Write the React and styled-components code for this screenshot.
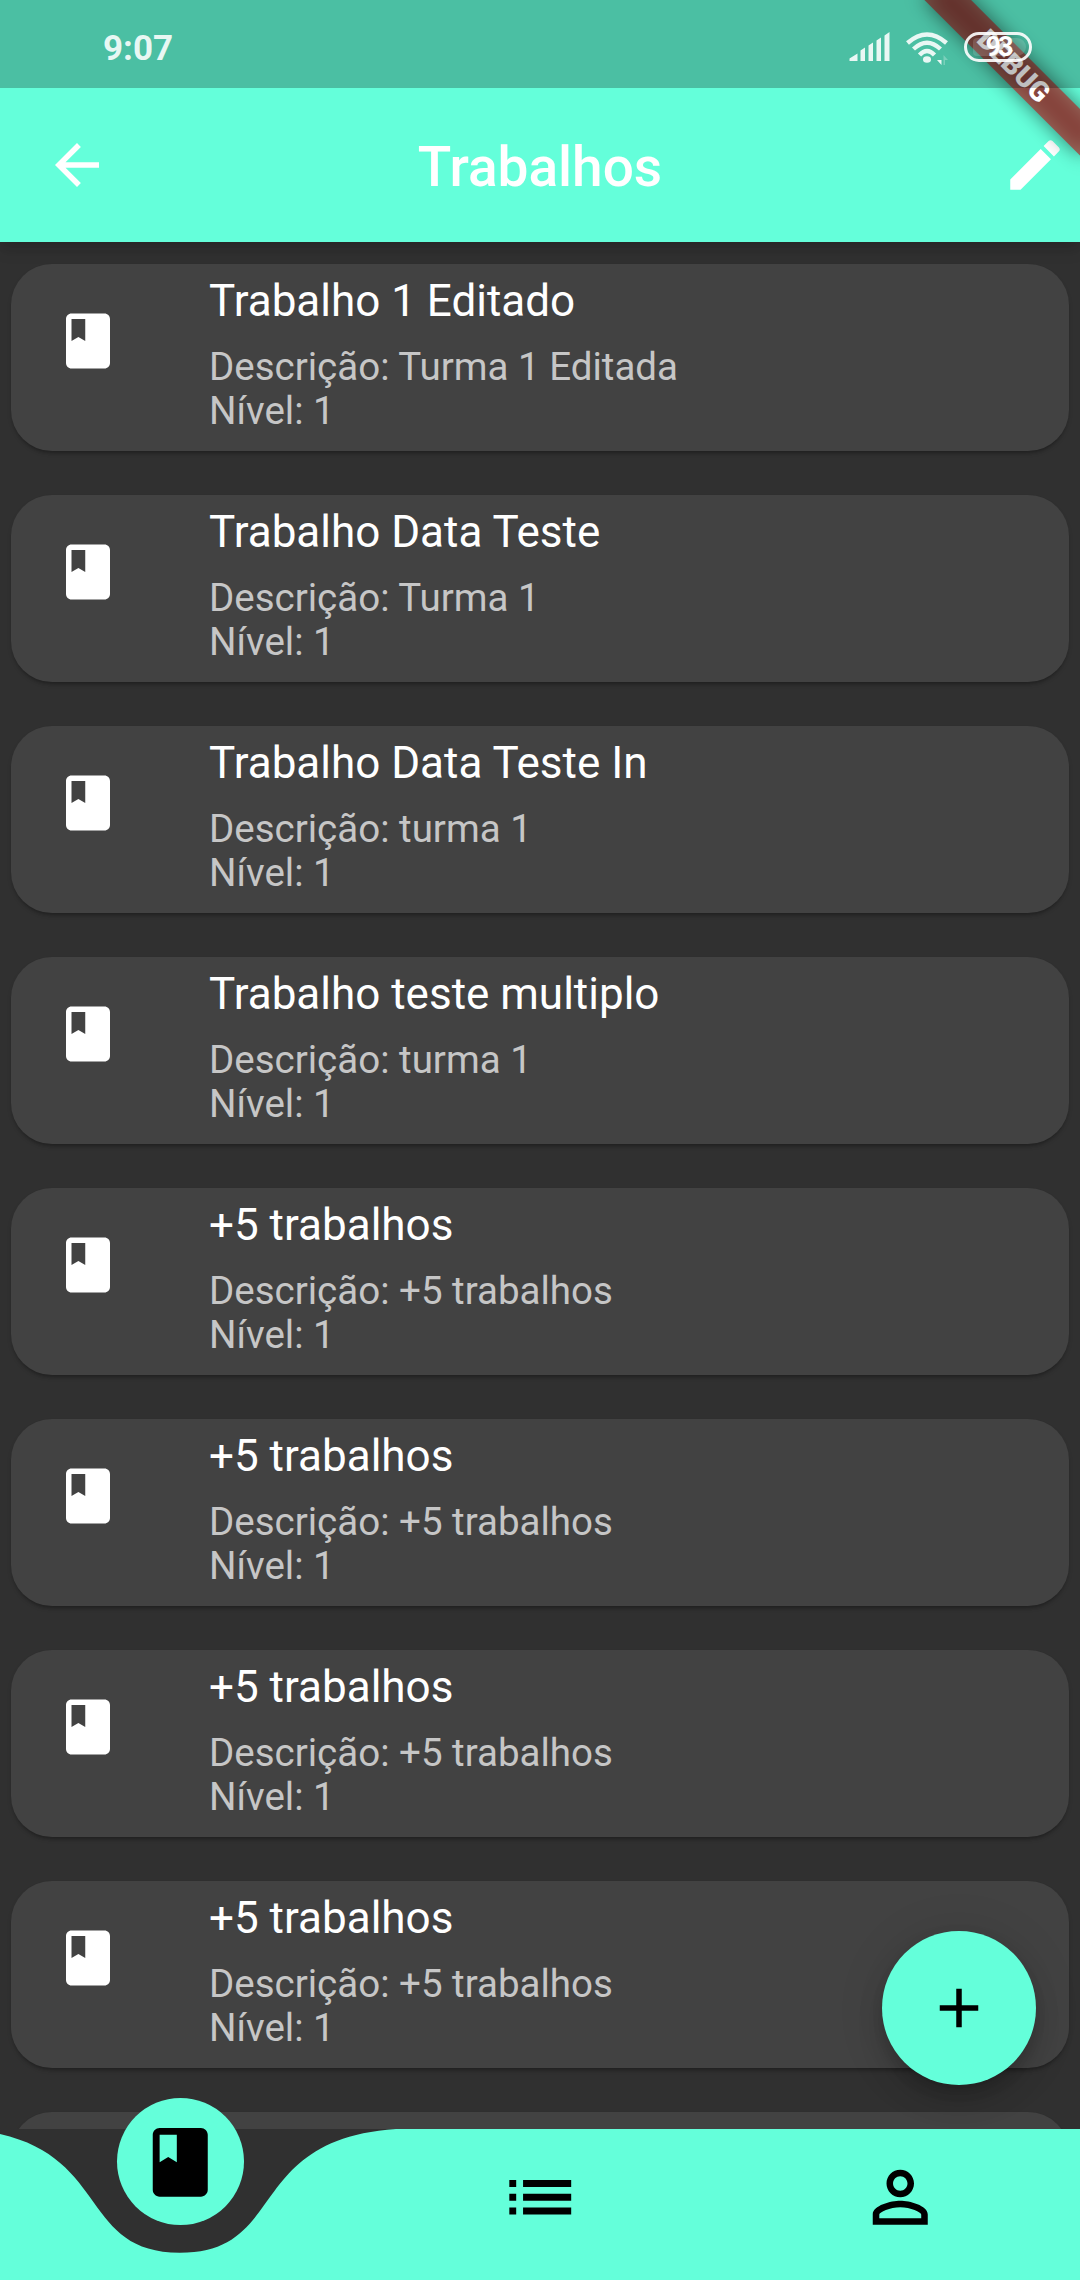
import React from "react";
import styled, { createGlobalStyle } from "styled-components";

const ACCENT = "#64ffda";

const GlobalStyle = createGlobalStyle`
  html, body { margin: 0; padding: 0; background: #303030; }
  * { box-sizing: border-box; }
`;

const Screen = styled.div`
  position: relative;
  display: flex;
  flex-direction: column;
  width: 1080px;
  height: 2280px;
  overflow: hidden;
  background: #303030;
  font-family: Roboto, "Noto Sans", sans-serif;
`;

const AppBar = styled.header`
  position: relative;
  z-index: 1;
  flex: none;
  display: flex;
  align-items: center;
  justify-content: space-between;
  height: 242px;
  padding: 88px 12px 0 44px;
  background: ${ACCENT};
  color: #fff;
  box-shadow: 0 5px 11px -3px rgba(0, 0, 0, 0.1), 0 9px 14px rgba(0, 0, 0, 0.1);
`;

const Title = styled.h1`
  margin: 3px 0 0 -32px;
  font-size: 55px;
  line-height: 64px;
  font-weight: 500;
`;

const Glyph = styled.svg`
  display: block;
  flex: none;
  width: ${(p) => p.$size}px;
  height: ${(p) => p.$size}px;
  fill: currentColor;
`;

const List = styled.main`
  flex: 1;
  min-height: 0;
  display: flex;
  flex-direction: column;
  gap: 44px;
  padding: 22px 11px 0;
  overflow: hidden;
`;

const Card = styled.article`
  flex: none;
  display: flex;
  gap: 88px;
  height: 187px;
  padding: 11px 44px;
  border-radius: 41px;
  background: #424242;
  color: #fff;
  box-shadow: 0 4px 3px -2px rgba(0, 0, 0, 0.2), 0 3px 4px rgba(0, 0, 0, 0.12);
`;

const CardIcon = styled.div`
  padding-top: 33px;
`;

const CardTitle = styled.h2`
  margin: 0 0 18px;
  font-size: 44px;
  line-height: 52px;
  font-weight: 400;
`;

const CardLine = styled.p`
  margin: 0;
  font-size: 38.5px;
  line-height: 44px;
  color: #c6c6c6;
`;

const NavBar = styled.nav`
  position: relative;
  flex: none;
  display: grid;
  grid-template-columns: repeat(3, 1fr);
  height: 151.25px;
  color: #000;
`;

const NavShape = styled.svg`
  position: absolute;
  inset: 0;
  width: 1080px;
  height: 151.25px;
  fill: ${ACCENT};
`;

const NavItem = styled.div`
  position: relative;
  display: flex;
  justify-content: center;
  padding-top: 27.5px;
`;

const ActiveItem = styled.div`
  position: relative;
  justify-self: center;
  display: flex;
  align-items: center;
  justify-content: center;
  width: 127px;
  height: 127px;
  margin-top: -30.5px;
  border-radius: 50%;
  background: ${ACCENT};
`;

const AddButton = styled.button`
  position: absolute;
  right: 44px;
  bottom: 195.25px;
  display: flex;
  align-items: center;
  justify-content: center;
  width: 154px;
  height: 154px;
  padding: 0;
  border: 0;
  border-radius: 50%;
  background: ${ACCENT};
  color: #000;
  box-shadow: 0 8px 14px -3px rgba(0, 0, 0, 0.14), 0 16px 27px rgba(0, 0, 0, 0.14),
    0 3px 50px rgba(0, 0, 0, 0.1);
`;

const DebugBanner = styled.div`
  position: absolute;
  z-index: 2;
  top: 77px;
  left: 970px;
  display: flex;
  align-items: center;
  justify-content: center;
  width: 220px;
  height: 33px;
  transform-origin: 110px -77px;
  transform: rotate(45deg);
  color: #fff;
  font-size: 28px;
  line-height: 28px;
  font-weight: 900;

  &::before,
  &::after {
    content: "";
    position: absolute;
    inset: 0;
  }
  &::before {
    background: rgba(0, 0, 0, 0.5);
    filter: blur(9.5px);
  }
  &::after {
    background: rgba(183, 28, 28, 0.627);
  }
`;

const BannerText = styled.span`
  position: relative;
  z-index: 1;
`;

const StatusBar = styled.div`
  position: absolute;
  z-index: 3;
  top: 0;
  left: 0;
  display: flex;
  align-items: center;
  width: 1080px;
  height: 88px;
  padding: 6px 48px 0 103px;
  background: rgba(0, 0, 0, 0.25);
  color: rgba(255, 255, 255, 0.88);
`;

const Clock = styled.span`
  flex: 1;
  padding-top: 4px;
  font-size: 35px;
  line-height: 40px;
  font-weight: 700;
`;

const Signal = styled.svg`
  width: 41px;
  height: 30px;
  margin-right: 15px;
  fill: currentColor;
`;

const Wifi = styled.svg`
  width: 44px;
  height: 34px;
  margin: 3px 15px 0 0;
  fill: none;
  stroke: currentColor;
`;

const Battery = styled.div`
  position: relative;
  display: flex;
  align-items: center;
  justify-content: center;
  width: 68px;
  height: 30px;
  border: 3px solid rgba(255, 255, 255, 0.9);
  border-radius: 15px;
  color: #fff;
  font-size: 27px;
  line-height: 28px;
  font-weight: 700;
  letter-spacing: -3px;

  &::before {
    content: "";
    position: absolute;
    inset: 3px 3px 3px 6px;
    border-radius: 4px 9px 9px 4px;
    background: rgba(255, 255, 255, 0.15);
  }
`;

const PATHS = {
  back: "M20 11H7.83l5.59-5.59L12 4l-8 8 8 8 1.41-1.41L7.83 13H20v-2z",
  edit: "M3 17.25V21h3.75L17.81 9.94l-3.75-3.75L3 17.25zM20.71 7.04c.39-.39.39-1.02 0-1.41l-2.34-2.34c-.39-.39-1.02-.39-1.41 0l-1.83 1.83 3.75 3.75 1.83-1.83z",
  book: "M18 2H6c-1.1 0-2 .9-2 2v16c0 1.1.9 2 2 2h12c1.1 0 2-.9 2-2V4c0-1.1-.9-2-2-2zM6 4h5v8l-2.5-1.5L6 12V4z",
  list: "M3 13h2v-2H3v2zm0 4h2v-2H3v2zm0-8h2V7H3v2zm4 4h14v-2H7v2zm0 4h14v-2H7v2zM7 7v2h14V7H7z",
  person:
    "M12 5.9c1.16 0 2.1.94 2.1 2.1s-.94 2.1-2.1 2.1S9.9 9.16 9.9 8s.94-2.1 2.1-2.1m0 9c2.97 0 6.1 1.46 6.1 2.1v1.1H5.9V17c0-.64 3.13-2.1 6.1-2.1M12 4C9.79 4 8 5.79 8 8s1.79 4 4 4 4-1.79 4-4-1.79-4-4-4zm0 9c-2.67 0-8 1.34-8 4v3h16v-3c0-2.66-5.33-4-8-4z",
  add: "M19 13h-6v6h-2v-6H5v-2h6V5h2v6h6v2z",
};

function Icon({ name, size = 66 }) {
  return (
    <Glyph $size={size} viewBox="0 0 24 24">
      <path d={PATHS[name]} />
    </Glyph>
  );
}

const WORKS = [
  { title: "Trabalho 1 Editado", text: "Turma 1 Editada" },
  { title: "Trabalho Data Teste", text: "Turma 1" },
  { title: "Trabalho Data Teste In", text: "turma 1" },
  { title: "Trabalho teste multiplo", text: "turma 1" },
  { title: "+5 trabalhos", text: "+5 trabalhos" },
  { title: "+5 trabalhos", text: "+5 trabalhos" },
  { title: "+5 trabalhos", text: "+5 trabalhos" },
  { title: "+5 trabalhos", text: "+5 trabalhos" },
];

export default function App() {
  return (
    <Screen>
      <GlobalStyle />
      <AppBar>
        <Icon name="back" />
        <Title>Trabalhos</Title>
        <Icon name="edit" />
      </AppBar>

      <List>
        {WORKS.map((work, i) => (
          <Card key={i}>
            <CardIcon>
              <Icon name="book" />
            </CardIcon>
            <div>
              <CardTitle>{work.title}</CardTitle>
              <CardLine>Descrição: {work.text}</CardLine>
              <CardLine>Nível: 1</CardLine>
            </div>
          </Card>
        ))}
        <Card />
      </List>

      <NavBar>
        <NavShape viewBox="0 0 1080 151.25">
          <path d="M-36 0C115.2 10.3 72 123.75 180 123.75S244.8 10.3 396 0H1080V152H-36Z" />
        </NavShape>
        <ActiveItem>
          <Icon name="book" size={82.5} />
        </ActiveItem>
        <NavItem>
          <Icon name="list" size={82.5} />
        </NavItem>
        <NavItem>
          <Icon name="person" size={82.5} />
        </NavItem>
      </NavBar>

      <AddButton>
        <Icon name="add" />
      </AddButton>

      <DebugBanner>
        <BannerText>DEBUG</BannerText>
      </DebugBanner>

      <StatusBar>
        <Clock>9:07</Clock>
        <Signal viewBox="0 0 41 30">
          <path d="M0.500 29V26.500L8.500 21.500V29ZM11.500 29V18.500L16 15.500V29ZM19.500 29V13.500L24 10.500V29ZM27.500 29V8.500L32 5.500V29ZM35.500 29V3.500L40.500 0V29Z" />
        </Signal>
        <Wifi viewBox="0 0 44 34">
          <path d="M2.500 11Q22 -6 41.500 11M8.500 17Q22 4.500 35.500 17M14.500 23Q22 15 29.500 23" strokeWidth="4.400" />
          <ellipse cx="22" cy="27.500" rx="4" ry="3.200" fill="currentColor" stroke="none" />
          <path d="M36.500 23V33L32 28H36.500Z" fill="currentColor" stroke="none" />
          <path d="M38.500 33V23L43 28H40V33Z" fill="currentColor" stroke="none" opacity=".3" />
        </Wifi>
        <Battery>93</Battery>
      </StatusBar>
    </Screen>
  );
}
